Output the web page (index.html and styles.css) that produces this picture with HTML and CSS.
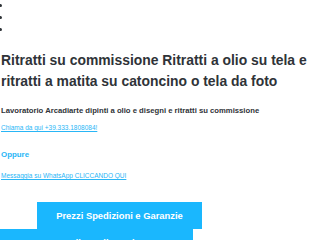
FILE: index.html
```html
<!DOCTYPE html>
<html lang="it">
<head>
    <meta charset="UTF-8">
    <meta name="viewport" content="width=device-width, initial-scale=1.0">
    <title>Ritratti su commissione</title>
    <link rel="stylesheet" href="styles.css">
</head>
<body>
    <ul class="menu">
        <li></li>
        <li></li>
        <li></li>
    </ul>

    <div class="content">
        <h1>Ritratti su commissione Ritratti a olio su tela e ritratti a matita su catoncino o tela da foto</h1>
        <h2>Lavoratorio Arcadiarte dipinti a olio e disegni e ritratti su commissione</h2>
        <p><a href="#">Chiama da qui +39.333.1808084!</a></p>
        <h3>Oppure</h3>
        <p><a href="#">Messaggia su WhatsApp CLICCANDO QUI</a></p>

        <div class="buttons">
            <a class="btn btn-top" href="#">Prezzi Spedizioni e Garanzie</a>
            <a class="btn btn-bottom" href="#">Come ordinare il tuo ritratto</a>
        </div>
    </div>
</body>
</html>
```

FILE: styles.css
```css
body {
    margin: 0;
    font-family: "Liberation Sans", Arial, sans-serif;
    color: #2f3338;
    background: #fff;
}
.menu {
    margin: 0;
    padding: 0 0 0 12px;
    font-size: 10px;
    line-height: 12px;
}
.menu li {
    height: 12px;
}
.content {
    padding: 0 1px;
}
h1 {
    font-size: 13.9px;
    line-height: 21px;
    margin: 14px 0 0;
}
h2 {
    font-size: 7.7px;
    line-height: 10px;
    margin: 14px 0 0;
}
p {
    font-size: 6.5px;
    line-height: 8px;
    margin: 8px 0 0;
}
a {
    color: #29b6f6;
}
h3 {
    font-size: 7.9px;
    line-height: 10px;
    margin: 18px 0 0;
    color: #29b6f6;
}
p + h3 + p {
    margin-top: 12px;
}
.buttons {
    margin: 22px -1px 0;
    display: flex;
    flex-direction: column;
    align-items: flex-start;
}
.btn {
    display: block;
    background: #1ab7fe;
    color: #fff;
    text-decoration: none;
    font-weight: bold;
    font-size: 9.4px;
    line-height: 27px;
    text-align: center;
}
.btn-top {
    margin-left: 37px;
    width: 165px;
}
.btn-bottom {
    width: 193px;
}
```
